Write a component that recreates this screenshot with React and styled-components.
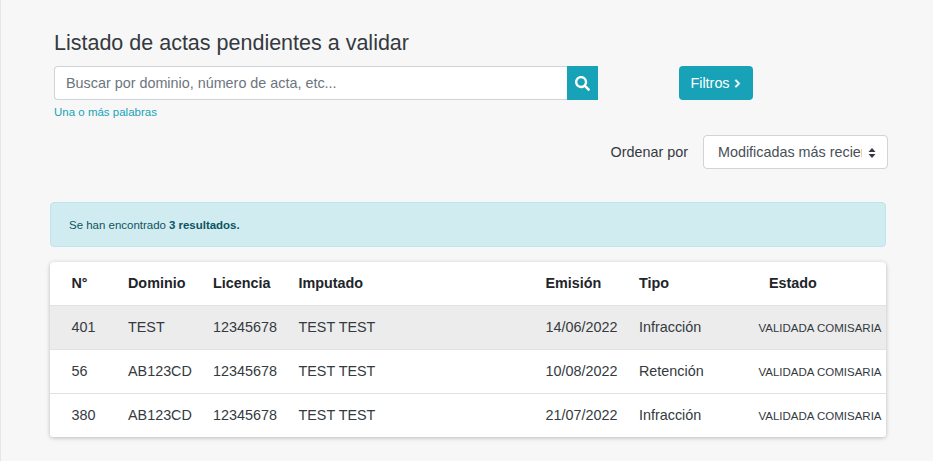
import React from "react";
import styled, { createGlobalStyle } from "styled-components";
import { FaSearch, FaChevronRight } from "react-icons/fa";

const Global = createGlobalStyle`
  html, body { margin: 0; padding: 0; height: 100%; background: #f7f7f7; }
  body { font-family: "Liberation Sans", Arial, sans-serif; color: #212529; overflow: hidden; }
  * { box-sizing: border-box; }
`;

const Page = styled.main`
  width: 933px;
  height: 461px;
  background: #f7f7f7;
  border-left: 1px solid #e6e6e6;
  padding: 29px 47px 0 49px;
`;

const SearchArea = styled.section`
  padding-left: 4px;
`;

const Title = styled.h1`
  margin: 0 0 8px;
  font-size: 21.5px;
  line-height: 29px;
  font-weight: 400;
  color: #343a40;
`;

const SearchRow = styled.div`
  display: flex;
  align-items: stretch;
  height: 34px;
`;

const SearchInput = styled.input`
  width: 513px;
  height: 34px;
  padding: 0 11px;
  border: 1px solid #ced4da;
  border-right: 0;
  border-radius: 4px 0 0 4px;
  background: #fff;
  font-family: inherit;
  font-size: 14.36px;
  &::placeholder { color: #6c757d; opacity: 1; }
`;

const SearchButton = styled.button`
  width: 31px;
  height: 34px;
  padding: 0;
  border: 0;
  background: #17a2b8;
  color: #fff;
  display: flex;
  align-items: center;
  justify-content: center;
  font-size: 15px;
`;

const FilterButton = styled.button`
  margin-left: 81px;
  width: 74px;
  height: 34px;
  padding: 0;
  border: 0;
  border-radius: 4px;
  background: #17a2b8;
  color: #fff;
  font-family: inherit;
  font-size: 14.36px;
  display: flex;
  align-items: center;
  justify-content: center;
  gap: 3px;
  svg { stroke: currentColor; stroke-width: 36px; }
`;

const Hint = styled.small`
  display: block;
  margin-top: 4px;
  font-size: 11.5px;
  line-height: 16px;
  color: #17a2b8;
`;

const SortRow = styled.div`
  display: flex;
  justify-content: flex-end;
  align-items: center;
  gap: 15px;
  margin-top: 15px;
  margin-right: -2px;
  height: 34px;
`;

const SortLabel = styled.label`
  font-size: 14.36px;
  color: #343a40;
`;

const SortBox = styled.div`
  position: relative;
  width: 185px;
  height: 34px;
  padding: 0 25px 0 14px;
  display: flex;
  align-items: center;
  border: 1px solid #ced4da;
  border-radius: 4px;
  background: #fff;
  color: #495057;
  font-size: 14.36px;
`;

const SortText = styled.span`
  display: block;
  overflow: hidden;
  white-space: nowrap;
`;

const SortArrows = styled.svg`
  position: absolute;
  right: 11px;
  top: 12px;
`;

const Notice = styled.div`
  margin-top: 33px;
  height: 45px;
  padding: 0 18px;
  display: flex;
  align-items: center;
  background: #d1ecf1;
  border: 1px solid #bee5eb;
  border-radius: 4px;
  color: #0c5460;
  font-size: 11.47px;
  b { margin-left: 3px; }
`;

const Card = styled.div`
  margin-top: 15px;
  background: #fff;
  border-radius: 4px;
  box-shadow: 0 1px 4px rgba(0, 0, 0, 0.25);
  overflow: hidden;
`;

const Table = styled.table`
  width: 100%;
  table-layout: fixed;
  border-collapse: separate;
  border-spacing: 0;
  font-size: 14.36px;
  color: #343a40;
`;

const Head = styled.th`
  height: 43px;
  padding: 0 0 2px ${(p) => p.$pad ?? 21}px;
  width: ${(p) => p.$w}px;
  text-align: left;
  font-weight: 700;
  color: #212529;
`;

const Row = styled.tr`
  background: ${(p) => (p.$active ? "#ececec" : "#fff")};
  td { border-top: 1px solid #e0e3e6; }
`;

const Cell = styled.td`
  height: 44px;
  padding: 0 0 2px ${(p) => p.$pad ?? 21}px;
  white-space: nowrap;
`;

const StatusCell = styled.td`
  height: 44px;
  padding: 1px 0 0 9.4px;
  font-size: 11.5px;
  white-space: nowrap;
`;

const data = [
  { n: "401", dom: "TEST", date: "14/06/2022", tipo: "Infracción" },
  { n: "56", dom: "AB123CD", date: "10/08/2022", tipo: "Retención" },
  { n: "380", dom: "AB123CD", date: "21/07/2022", tipo: "Infracción" },
];

export default function App() {
  return (
    <Page>
      <Global />
      <SearchArea>
        <Title>Listado de actas pendientes a validar</Title>
        <SearchRow>
          <SearchInput placeholder="Buscar por dominio, número de acta, etc..." />
          <SearchButton aria-label="Buscar">
            <FaSearch />
          </SearchButton>
          <FilterButton>
            Filtros
            <FaChevronRight size={9} />
          </FilterButton>
        </SearchRow>
        <Hint>Una o más palabras</Hint>
      </SearchArea>
      <SortRow>
        <SortLabel>Ordenar por</SortLabel>
        <SortBox>
          <SortText>Modificadas más recientes</SortText>
          <SortArrows width="8" height="10" viewBox="0 0 8 10" fill="#343a40">
            <path d="M4 0 L7.5 4 H0.5 Z M4 10 L0.5 6 H7.5 Z" />
          </SortArrows>
        </SortBox>
      </SortRow>
      <Notice>
        Se han encontrado <b>3 resultados.</b>
      </Notice>
      <Card>
        <Table>
          <thead>
            <tr>
              <Head $w={57} $pad={21.5}>N°</Head>
              <Head $w={85}>Dominio</Head>
              <Head $w={85.5}>Licencia</Head>
              <Head $w={247}>Imputado</Head>
              <Head $w={93.5}>Emisión</Head>
              <Head $w={131}>Tipo</Head>
              <Head $pad={20}>Estado</Head>
            </tr>
          </thead>
          <tbody>
            {data.map((r, i) => (
              <Row key={r.n} $active={i === 0}>
                <Cell $pad={21.5}>{r.n}</Cell>
                <Cell>{r.dom}</Cell>
                <Cell>12345678</Cell>
                <Cell>TEST TEST</Cell>
                <Cell>{r.date}</Cell>
                <Cell>{r.tipo}</Cell>
                <StatusCell>VALIDADA COMISARIA</StatusCell>
              </Row>
            ))}
          </tbody>
        </Table>
      </Card>
    </Page>
  );
}
